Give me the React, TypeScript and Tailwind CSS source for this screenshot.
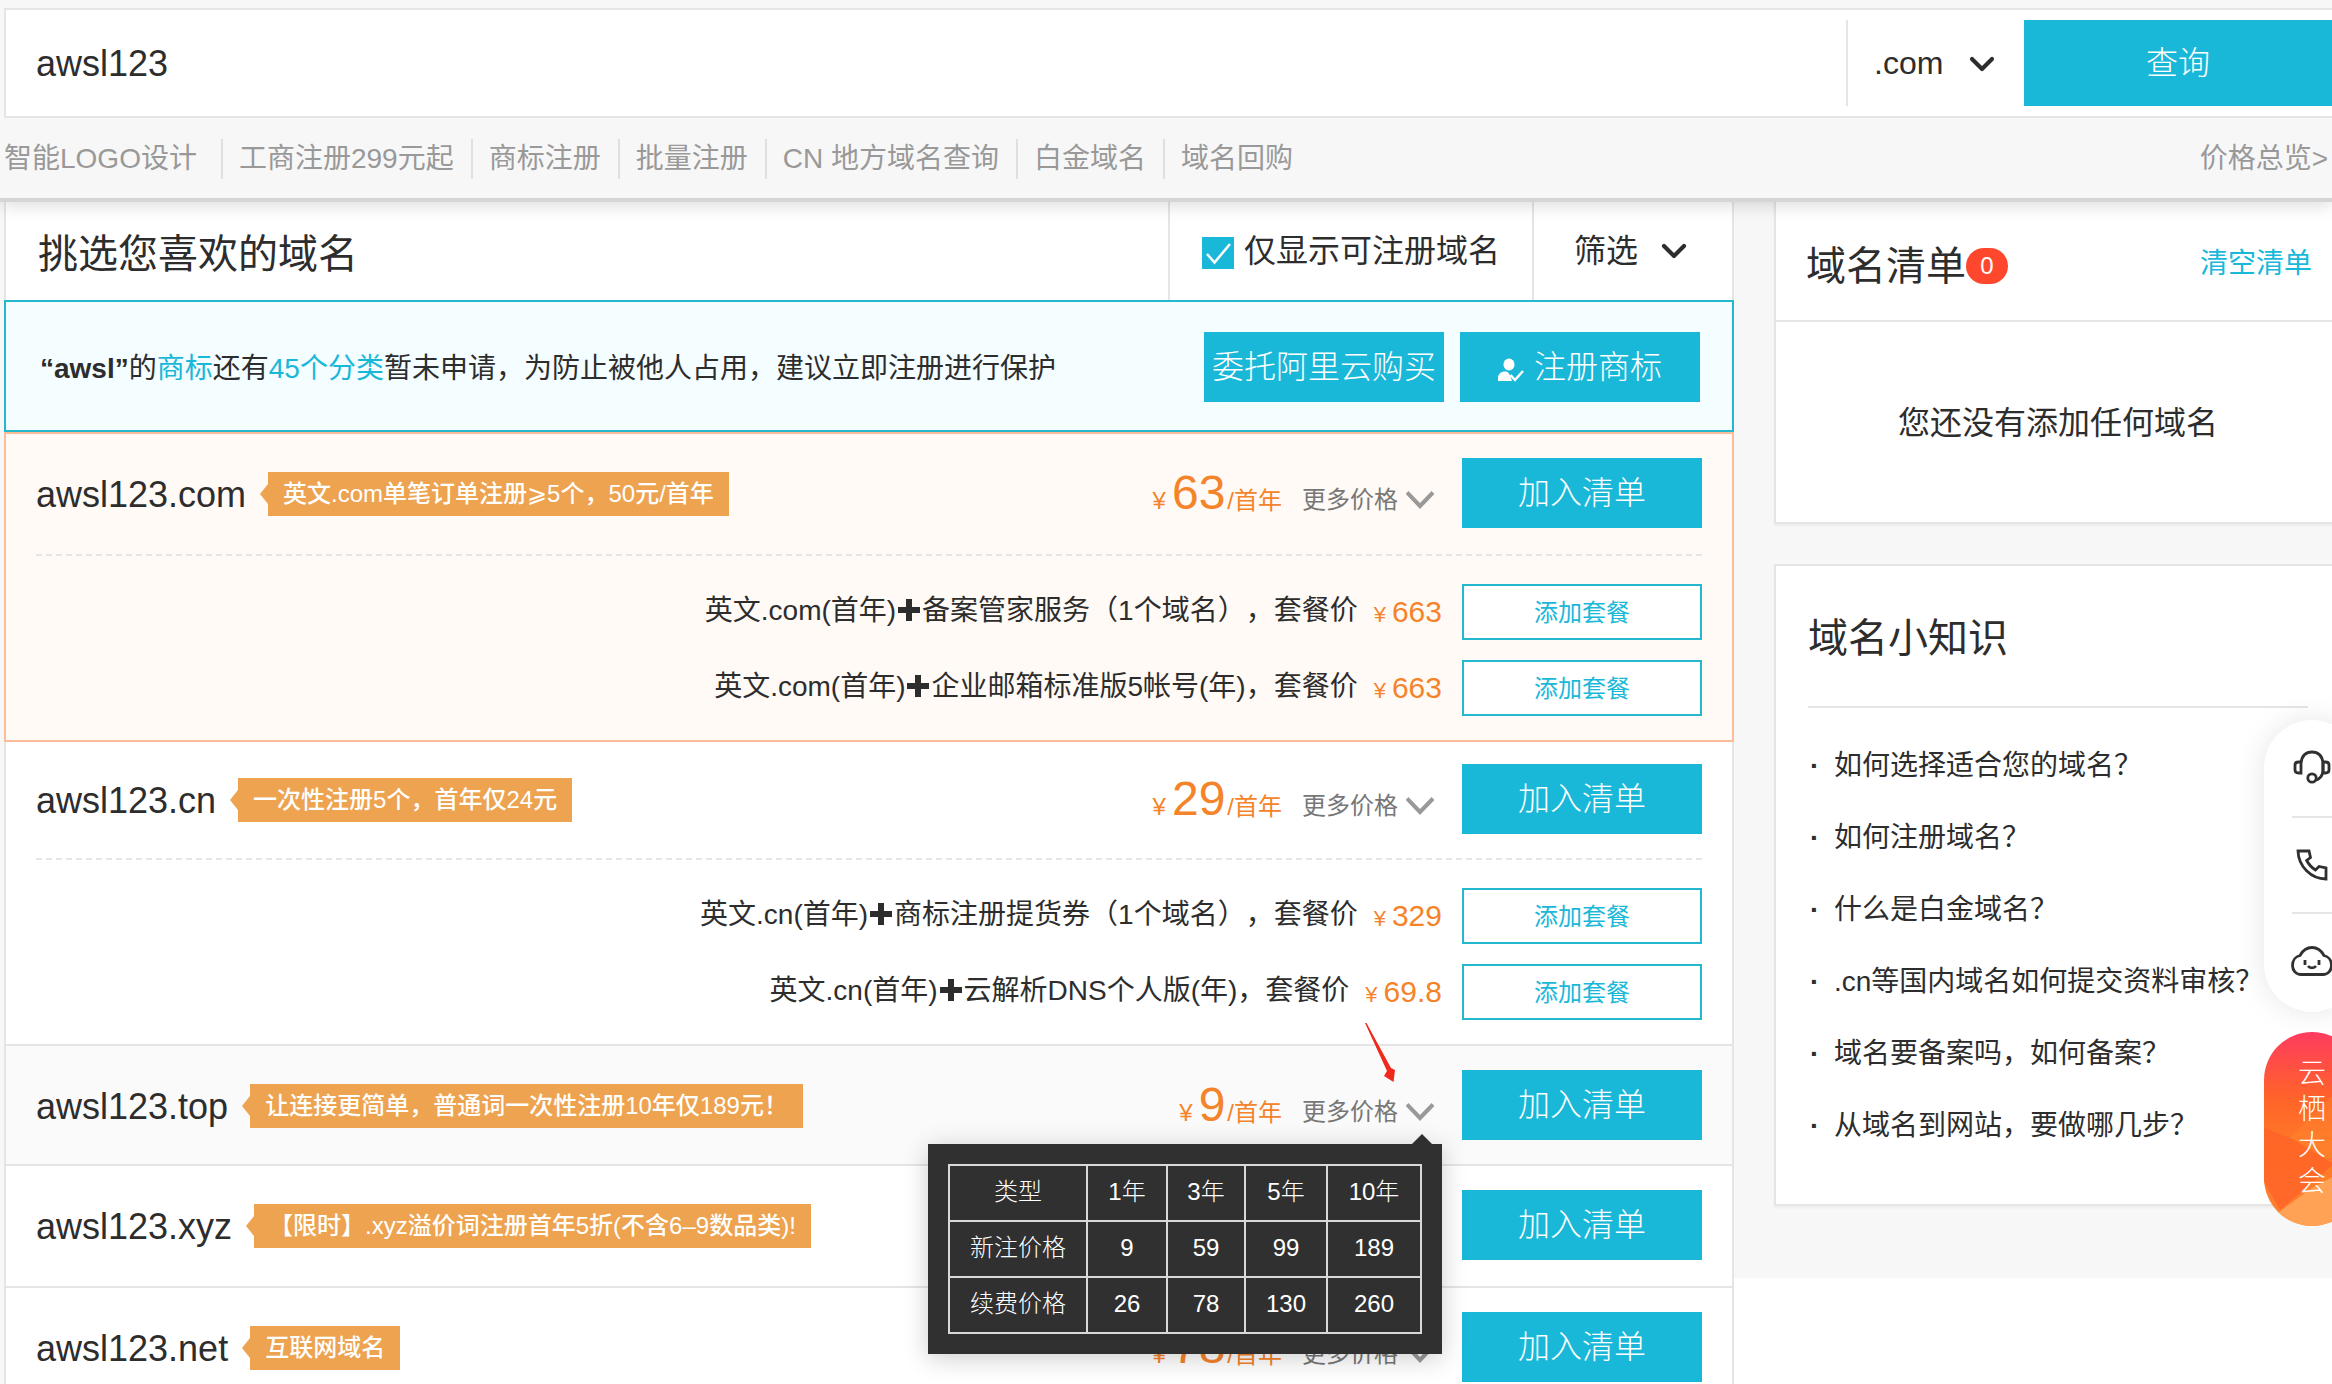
import { useState } from "react";
import { ChevronDown } from "lucide-react";

type TPack = { text: string; extra: string; price: string };
type TDomain = {
    name: string;
    promo: string;
    price?: string;
    rowClass: string;
    headClass: string;
    packs?: TPack[];
    showPrices?: boolean;
};

const quickLinks = [
    "智能LOGO设计",
    "工商注册299元起",
    "商标注册",
    "批量注册",
    "CN 地方域名查询",
    "白金域名",
    "域名回购",
];

const domains: TDomain[] = [
    {
        name: "awsl123.com",
        promo: "英文.com单笔订单注册⩾5个，50元/首年",
        price: "63",
        rowClass: "border-2 border-[#fabd98] bg-[#fffaf6]",
        headClass: "pt-6 pb-[26px]",
        packs: [
            { text: "英文.com(首年)", extra: "备案管家服务（1个域名），套餐价", price: "663" },
            { text: "英文.com(首年)", extra: "企业邮箱标准版5帐号(年)，套餐价", price: "663" },
        ],
    },
    {
        name: "awsl123.cn",
        promo: "一次性注册5个，首年仅24元",
        price: "29",
        rowClass: "border-x-2 border-b-2 border-[#e5e5e5] bg-white",
        headClass: "pt-[22px] pb-6",
        packs: [
            { text: "英文.cn(首年)", extra: "商标注册提货券（1个域名），套餐价", price: "329" },
            { text: "英文.cn(首年)", extra: "云解析DNS个人版(年)，套餐价", price: "69.8" },
        ],
    },
    {
        name: "awsl123.top",
        promo: "让连接更简单，普通词一次性注册10年仅189元！",
        price: "9",
        rowClass: "border-x-2 border-b-2 border-[#e5e5e5] bg-[#fafafa]",
        headClass: "py-6",
        showPrices: true,
    },
    {
        name: "awsl123.xyz",
        promo: "【限时】.xyz溢价词注册首年5折(不含6–9数品类)!",
        rowClass: "border-x-2 border-b-2 border-[#e5e5e5] bg-white",
        headClass: "pt-6 pb-[26px]",
    },
    {
        name: "awsl123.net",
        promo: "互联网域名",
        price: "78",
        rowClass: "border-x-2 border-b-2 border-[#e5e5e5] bg-white",
        headClass: "py-6",
    },
];

const priceTable = [
    ["新注价格", "9", "59", "99", "189"],
    ["续费价格", "26", "78", "130", "260"],
];

const tips = [
    "如何选择适合您的域名？",
    "如何注册域名？",
    "什么是白金域名？",
    ".cn等国内域名如何提交资料审核？",
    "域名要备案吗，如何备案？",
    "从域名到网站，要做哪几步？",
];

const PlusMark = () => (
    <svg className="mx-0.5 inline-block size-[22px] align-[-1px]" viewBox="0 0 22 22" fill="currentColor">
        <path d="M8 0h6v8h8v6h-8v8H8v-8H0V8h8z" />
    </svg>
);

const PriceTooltip = () => (
    <div className="absolute top-[74px] right-0 z-20 bg-[#303030] p-5 shadow-[0_4px_24px_rgba(0,0,0,0.2)]">
        <svg className="absolute -top-[10px] right-[10px] h-[10px] w-5" viewBox="0 0 20 10" fill="#303030">
            <path d="M0 10 10 0l10 10z" />
        </svg>
        <table className="w-[474px] table-fixed border-collapse text-center text-2xl font-light text-white">
            <thead>
                <tr className="h-14">
                    <th className="w-[138px] border-2 border-[#d9d9d9] pb-0.5 font-light">类型</th>
                    <th className="w-20 border-2 border-[#d9d9d9] pb-0.5 font-light">1年</th>
                    <th className="w-[78px] border-2 border-[#d9d9d9] pb-0.5 font-light">3年</th>
                    <th className="w-[82px] border-2 border-[#d9d9d9] pb-0.5 font-light">5年</th>
                    <th className="border-2 border-[#d9d9d9] pb-0.5 font-light">10年</th>
                </tr>
            </thead>
            <tbody>
                {priceTable.map((row) => (
                    <tr key={row[0]} className="h-14">
                        {row.map((cell) => (
                            <td key={cell} className="border-2 border-[#d9d9d9] pb-0.5">
                                {cell}
                            </td>
                        ))}
                    </tr>
                ))}
            </tbody>
        </table>
    </div>
);

const DomainRow = ({ domain }: { domain: TDomain }) => (
    <li className={domain.rowClass}>
        <div className={`mx-[30px] flex items-center ${domain.headClass}`}>
            <h3 className="pt-1 text-4xl">{domain.name}</h3>

            {/* promo tag */}
            <span className="relative mt-0.5 ml-[22px] bg-[#eda34f] px-[15px] text-2xl leading-[44px] font-medium whitespace-nowrap text-white">
                <svg className="absolute top-3 -left-2 h-5 w-2" viewBox="0 0 8 20" fill="#eda34f">
                    <path d="M8 0 0 10l8 10z" />
                </svg>
                {domain.promo}
            </span>

            {domain.price && (
                <div className="relative mr-5 ml-auto flex h-[70px] items-center">
                    <p className="mr-5 flex items-baseline text-2xl text-[#f5832a]">
                        <span className="mr-1.5">¥</span>
                        <span className="text-5xl leading-[60px]">{domain.price}</span>
                        <span className="ml-[2px]">/首年</span>
                    </p>
                    <button className="flex items-center pt-[13px] pr-1 text-2xl text-[#777]">
                        更多价格
                        <svg
                            className="ml-2 h-[18px] w-8"
                            viewBox="0 0 32 18"
                            fill="none"
                            stroke="#999"
                            strokeWidth="4"
                        >
                            <path d="M1 1.500 14 15 27 1.500" />
                        </svg>
                    </button>
                    {domain.showPrices && (
                        <>
                            <PriceTooltip />
                            <svg
                                className="absolute -top-12 right-[46px] h-[60px] w-8"
                                viewBox="0 0 32 60"
                                fill="#f0291d"
                            >
                                <path d="M1 1 2.500 1 27 46 31 48 29.500 60 20 54 23 49z" />
                            </svg>
                        </>
                    )}
                </div>
            )}

            <button
                className={`h-[70px] w-60 bg-[#1ab8d8] text-[32px] font-light text-white ${
                    domain.price ? "" : "ml-auto"
                }`}
            >
                加入清单
            </button>
        </div>

        {/* bundles */}
        {domain.packs && (
            <div className="mx-[30px] flex flex-col gap-5 border-t-2 border-dashed border-[#e5e5e5] pt-7 pb-6">
                {domain.packs.map((pack) => (
                    <div key={pack.extra} className="flex items-center justify-end text-[28px]">
                        <p className="pb-0.5 whitespace-nowrap">
                            {pack.text}
                            <PlusMark />
                            {pack.extra}
                        </p>
                        <p className="mr-5 ml-4 flex items-baseline pb-0.5 text-[30px] text-[#f5832a]">
                            <span className="mr-1.5 text-[22px]">¥</span>
                            {pack.price}
                        </p>
                        <button className="h-14 w-60 border-2 border-[#25b7cd] bg-white pt-0.5 text-2xl text-[#1ab8d8]">
                            添加套餐
                        </button>
                    </div>
                ))}
            </div>
        )}
    </li>
);

const FloatingBar = () => (
    <div className="absolute top-[720px] -right-7 z-30 flex w-24 flex-col gap-5">
        <div className="flex flex-col items-center rounded-[48px] bg-white px-7 shadow-[0_0_30px_rgba(0,0,0,0.1)]">
            <a href="#service" aria-label="在线客服" className="flex h-24 items-center justify-center">
                <svg className="h-9 w-10" viewBox="0 0 40 36" fill="none" stroke="#303030" strokeWidth="2.800">
                    <path d="M9 12.500C10 6 14 2 20 2s10 4 11 10.500v9c-1 5-4 8-7.500 8.500" />
                    <path d="M9 11.500v11.500H6.500C4 23 3 22 3 20v-5c0-2 1-3 3.500-3H9M31 12V23h2.500c2.500 0 3.500-1 3.500-3v-5c0-2-1-3-3.500-3H31" />
                    <circle cx="20" cy="28" r="4.200" />
                </svg>
            </a>
            <a
                href="#phone"
                aria-label="电话咨询"
                className="flex h-[98px] w-10 items-center justify-center border-y-2 border-[#e5e5e5]"
            >
                <svg className="size-8" viewBox="0 0 32 32" fill="none" stroke="#303030" strokeWidth="2.800">
                    <path d="M2 2h11l1.500 6.500-3.800 3c2 4 5 7 8.800 9.500l3.500-3.500 7 1.500v11C15 30 2.500 17.500 2 2z" />
                </svg>
            </a>
            <a href="#feedback" aria-label="意见反馈" className="flex h-[98px] items-center justify-center pb-1">
                <svg className="h-8 w-[42px]" viewBox="0 0 42 32" fill="none" stroke="#303030" strokeWidth="2.800">
                    <path d="M10 29.500c-5 0-8.500-4-8.500-9s3-9 7.500-10C12 5 16 2.500 21 2.500S30 5 33 10.500c4.500 1 7.500 5 7.500 10s-3.500 9-8.500 9z" />
                    <path d="M14 15v5M28 15v5M17 21c1.800 2.500 6.200 2.500 8 0" />
                </svg>
            </a>
        </div>

        <a
            href="#apsara"
            className="relative flex flex-col items-center overflow-hidden rounded-[48px] pt-6 pb-[26px] text-[28px] leading-9 font-light text-white"
        >
            <svg className="absolute inset-0 size-full" viewBox="0 0 96 194" preserveAspectRatio="none">
                <defs>
                    <linearGradient id="pill" x1="0" y1="0" x2="0" y2="1">
                        <stop offset="0" stopColor="#ff3c5f" />
                        <stop offset="0.350" stopColor="#ff6428" />
                        <stop offset="0.600" stopColor="#ff7a28" />
                        <stop offset="1" stopColor="#ff7f30" />
                    </linearGradient>
                </defs>
                <path fill="url(#pill)" d="M0 0h96v194H0z" />
                <path fill="#ff8a2c" fillOpacity="0.400" d="M96 36 26 106l70 34z" />
                <path fill="#ff6026" fillOpacity="0.700" d="M0 96l26 10 44 26-54 46L0 150z" />
                <path fill="#ffa255" d="M12 182 48 156l48-26v64H12z" />
            </svg>
            <span className="relative">云</span>
            <span className="relative">栖</span>
            <span className="relative">大</span>
            <span className="relative">会</span>
        </a>
    </div>
);

export default function App() {
    const [keyword, setKeyword] = useState("awsl123");
    const [onlyAvailable, setOnlyAvailable] = useState(true);

    return (
        <div className="relative h-screen overflow-hidden bg-[#f7f7f7] font-['Liberation_Sans','Noto_Sans_CJK_SC',sans-serif] text-[#2d2d2d] [text-spacing-trim:space-all]">
            <header className="relative z-10 bg-[#f7f7f7] pt-2 pl-1 shadow-[0_4px_0_#d5d5d5,0_6px_18px_rgba(0,0,0,0.16)]">
                <form className="-mr-3 flex border-2 border-[#e5e5e5] bg-white py-2.5 pr-2.5">
                    <input
                        aria-label="域名"
                        value={keyword}
                        onChange={(e) => setKeyword(e.target.value)}
                        className="h-[86px] min-w-0 flex-1 bg-transparent pt-0.5 pl-[30px] text-4xl outline-none"
                    />
                    <div className="relative w-[178px] border-l-2 border-[#e5e5e5]">
                        <select
                            aria-label="域名后缀"
                            className="size-full appearance-none bg-transparent pl-[26px] text-[32px] outline-none"
                        >
                            <option>.com</option>
                        </select>
                        <ChevronDown
                            className="pointer-events-none absolute top-6 right-[22px] size-10"
                            strokeWidth={2.5}
                        />
                    </div>
                    <button type="button" className="w-[308px] bg-[#1ab8d8] text-[32px] font-light text-white">
                        查询
                    </button>
                </form>

                <nav className="flex h-20 items-center pt-0.5 text-[28px] whitespace-nowrap text-[#999]">
                    {quickLinks.map((label, i) => (
                        <a
                            key={label}
                            href="#"
                            className={
                                i === 0
                                    ? "pr-6 leading-10"
                                    : "border-l-2 border-[#e0e0e0] pr-[17px] pl-4 leading-10"
                            }
                        >
                            {label}
                        </a>
                    ))}
                    <a href="#" className="mr-1 ml-auto">
                        价格总览&gt;
                    </a>
                </nav>
            </header>

            <main className="-mr-2.5 flex pl-1">
                <section className="min-w-0 flex-1">
                    {/* list header */}
                    <div className="flex h-[102px] border-x-2 border-[#e5e5e5] bg-white">
                        <h2 className="flex-1 self-center pt-2.5 pl-8 text-[40px]">挑选您喜欢的域名</h2>
                        <label className="flex items-center gap-2.5 border-l-2 border-[#e5e5e5] pt-1 pr-8 pl-8 text-[32px]">
                            <span className="relative mt-1 size-8">
                                <input
                                    type="checkbox"
                                    checked={onlyAvailable}
                                    onChange={(e) => setOnlyAvailable(e.target.checked)}
                                    className="block size-8 appearance-none border-2 border-[#1ab8d8] bg-white checked:bg-[#1ab8d8]"
                                />
                                {onlyAvailable && (
                                    <svg
                                        className="pointer-events-none absolute inset-0 size-8"
                                        viewBox="0 0 32 32"
                                        fill="none"
                                        stroke="#fff"
                                        strokeWidth="2.500"
                                    >
                                        <path d="M5 17l7.500 8.500L28 7" />
                                    </svg>
                                )}
                            </span>
                            仅显示可注册域名
                        </label>
                        <button className="flex items-center border-l-2 border-[#e5e5e5] pt-1 pr-[38px] pl-10 text-[32px]">
                            筛选
                            <ChevronDown className="ml-4 size-10" strokeWidth={2.5} />
                        </button>
                    </div>

                    {/* trademark banner */}
                    <div className="flex h-[132px] items-center gap-4 border-2 border-[#25b7cd] bg-[#f4fdff] pt-0.5 pr-8 pl-[34px] text-[28px]">
                        <p className="mr-auto pt-1 whitespace-nowrap">
                            <b>“awsl”</b>的
                            <a href="#" className="text-[#1ab8d8]">商标</a>
                            还有
                            <a href="#" className="text-[#1ab8d8]">45个分类</a>
                            暂未申请，为防止被他人占用，建议立即注册进行保护
                        </p>
                        <button className="h-[70px] w-60 bg-[#1ab8d8] text-[32px] font-light text-white">
                            委托阿里云购买
                        </button>
                        <button className="flex h-[70px] w-60 items-center justify-center gap-2.5 bg-[#1ab8d8] text-[32px] font-light text-white">
                            <svg className="mt-1.5 h-6 w-[26px]" viewBox="0 0 26 24" fill="currentColor">
                                <ellipse cx="11" cy="6.500" rx="5.500" ry="6" />
                                <path d="M0 23v-3c0-4 3-6.500 7-6.500 3 0 4 1.500 5.500 5L14 23z" />
                                <path d="M12.500 17l4.500 5 8-9" fill="none" stroke="currentColor" strokeWidth="2.500" />
                            </svg>
                            注册商标
                        </button>
                    </div>

                    <ul>
                        {domains.map((domain) => (
                            <DomainRow key={domain.name} domain={domain} />
                        ))}
                    </ul>
                </section>

                <aside className="flex w-[608px] shrink-0 flex-col">
                    <div className="ml-10 border-2 border-[#e5e5e5] bg-white shadow-[0_2px_2px_rgba(0,0,0,0.04)]">
                        <div className="flex h-[122px] items-center border-b-2 border-[#e5e5e5] pt-3 pr-7 pl-[30px]">
                            <h2 className="text-[40px]">域名清单</h2>
                            <span className="h-9 w-[42px] rounded-full bg-[#ff472e] text-center text-2xl leading-9 text-white">
                                0
                            </span>
                            <a href="#" className="ml-auto pb-1 text-[28px] text-[#1ab8d8]">
                                清空清单
                            </a>
                        </div>
                        <p className="pt-[77px] pb-[75px] text-center text-[32px] leading-[48px]">
                            您还没有添加任何域名
                        </p>
                    </div>

                    <div className="mt-10 ml-10 border-2 border-[#e5e5e5] bg-white px-8 pb-[42px] shadow-[0_2px_2px_rgba(0,0,0,0.04)]">
                        <h2 className="border-b-2 border-[#e5e5e5] pt-1 text-[40px] leading-[136px]">
                            域名小知识
                        </h2>
                        <ul className="pt-[22px] text-[28px] leading-[72px] whitespace-nowrap">
                            {tips.map((tip) => (
                                <li key={tip} className="flex">
                                    <span className="w-[26px] pl-0.5 font-bold">·</span>
                                    <a href="#">{tip}</a>
                                </li>
                            ))}
                        </ul>
                    </div>

                    <div className="mt-[72px] flex-1 bg-white" />
                </aside>
            </main>

            <FloatingBar />
        </div>
    );
}
